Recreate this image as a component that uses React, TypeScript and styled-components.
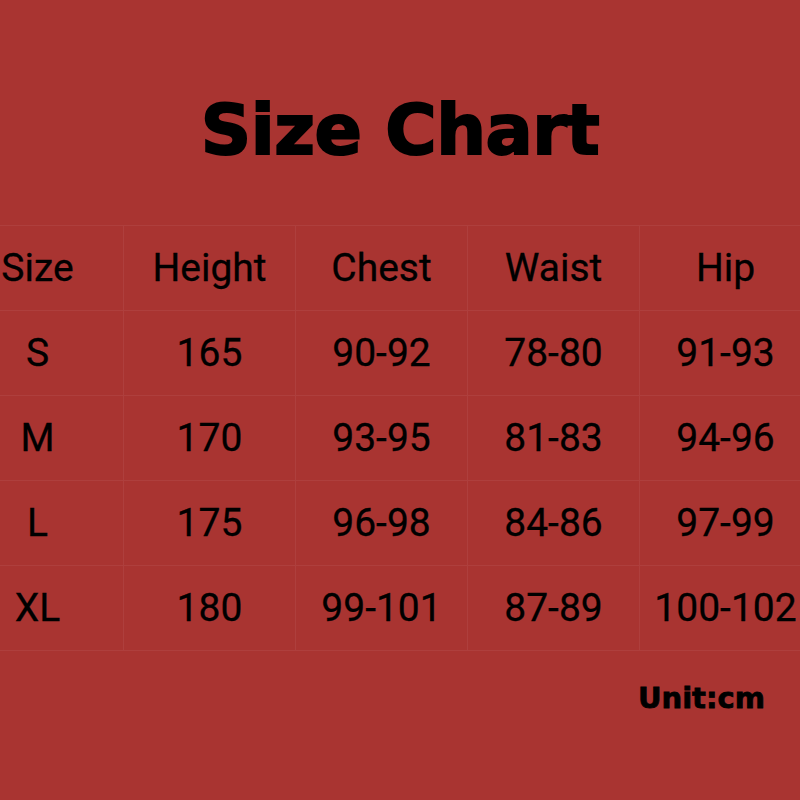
import React from "react";
import styled, { createGlobalStyle } from "styled-components";

const Global = createGlobalStyle`
  html, body { margin: 0; padding: 0; background: #a93431; }
  #root { width: 800px; height: 800px; overflow: hidden; }
`;

const Page = styled.div`
  width: 800px;
  height: 800px;
  background: #a93431;
  display: flex;
  flex-direction: column;
  overflow: hidden;
`;

const Title = styled.h1`
  margin: 0;
  padding-top: 90px;
  height: 225px;
  flex: none;
  box-sizing: border-box;
  text-align: center;
  font-family: "DejaVu Sans", sans-serif;
  font-weight: 700;
  font-size: 70px;
  line-height: 80px;
  color: #000;
  letter-spacing: -0.5px;
  -webkit-text-stroke: 2px #000;
`;

const Table = styled.div`
  margin-left: -48px;
  width: 860px;
  display: grid;
  grid-template-columns: repeat(5, 172px);
  grid-auto-rows: 85px;
  border-top: 1px solid rgba(255, 255, 255, 0.06);
`;

const Cell = styled.div`
  display: flex;
  align-items: center;
  justify-content: center;
  font-family: Roboto, sans-serif;
  font-weight: 400;
  font-size: 39px;
  color: #000;
  -webkit-text-stroke: 0.3px #000;
  border-right: 1px solid rgba(255, 255, 255, 0.06);
  border-bottom: 1px solid rgba(255, 255, 255, 0.06);
  box-sizing: border-box;
`;

const Footer = styled.div`
  display: flex;
  justify-content: flex-end;
  padding: 30px 35px 0 0;
`;

const Unit = styled.span`
  font-family: "DejaVu Sans", sans-serif;
  font-weight: 700;
  font-size: 29px;
  color: #000;
  -webkit-text-stroke: 0.8px #000;
`;

const rows = [
  ["Size", "Height", "Chest", "Waist", "Hip"],
  ["S", "165", "90-92", "78-80", "91-93"],
  ["M", "170", "93-95", "81-83", "94-96"],
  ["L", "175", "96-98", "84-86", "97-99"],
  ["XL", "180", "99-101", "87-89", "100-102"],
];

export default function App() {
  return (
    <Page>
      <Global />
      <Title>Size Chart</Title>
      <Table>
        {rows.map((r, i) => r.map((c, j) => <Cell key={`${i}-${j}`}>{c}</Cell>))}
      </Table>
      <Footer>
        <Unit>Unit:cm</Unit>
      </Footer>
    </Page>
  );
}
